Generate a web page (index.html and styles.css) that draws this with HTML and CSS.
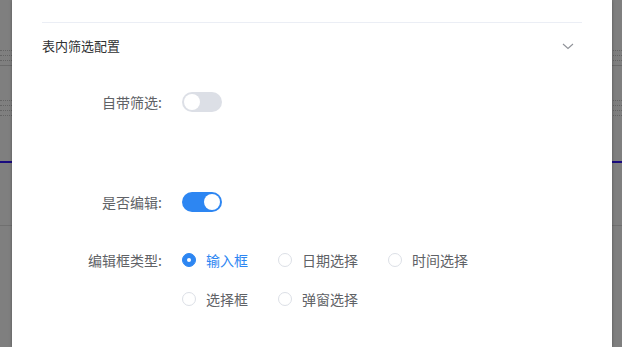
FILE: index.html
```html
<!DOCTYPE html>
<html>
<head>
  <title>表内筛选配置</title>
  <link rel="stylesheet" href="styles.css">
</head>
<body>
  <!-- page behind the drawer -->
  <div class="bg-page">
    <div class="bg-dot"></div>
    <div class="bg-dot"></div>
    <div class="bg-dot"></div>
    <div class="bg-solid"></div>
    <div class="bg-dot gap"></div>
    <div class="bg-dot"></div>
    <div class="bg-dot"></div>
    <div class="bg-dot"></div>
    <div class="bg-accent"></div>
    <div class="bg-solid low"></div>
  </div>
  <div class="mask"></div>

  <div class="drawer">
    <div class="collapse">
      <div class="collapse-head">
        <span>表内筛选配置</span>
        <svg class="chevron" width="12" height="12" viewBox="0 0 12 12"><path d="M1 4 L6 8.5 L11 4" fill="none" stroke="#909399" stroke-width="1.1"/></svg>
      </div>
      <div class="collapse-body">
        <div class="form-item">
          <label class="form-label">自带筛选:</label>
          <span class="switch"><span class="knob"></span></span>
        </div>
        <div class="form-item edit-item">
          <label class="form-label">是否编辑:</label>
          <span class="switch on"><span class="knob"></span></span>
        </div>
        <div class="form-item radio-item">
          <label class="form-label">编辑框类型:</label>
          <div class="radio-group">
            <span class="radio checked"><span class="radio-dot"></span>输入框</span>
            <span class="radio"><span class="radio-dot"></span>日期选择</span>
            <span class="radio"><span class="radio-dot"></span>时间选择</span>
            <span class="radio"><span class="radio-dot"></span>选择框</span>
            <span class="radio"><span class="radio-dot"></span>弹窗选择</span>
          </div>
        </div>
      </div>
    </div>
  </div>
</body>
</html>
```

FILE: styles.css
```css
/* Base */
body {
  margin: 0;
  width: 622px;
  height: 347px;
  overflow: hidden;
  position: relative;
  background: #fff;
  font-family: "Noto Sans CJK SC", "Noto Sans", sans-serif;
  font-size: 14px;
  color: #606266;
}
/* Background page */
.bg-page {
  padding-top: 50px;
}
.bg-dot {
  border-top: 1px dotted #c8c8c8;
  margin-bottom: 4px;
}
.bg-dot.gap {
  margin-top: 34px;
}
.bg-solid {
  border-top: 1px solid #d6d6d6;
}
.bg-accent {
  margin-top: 45px;
  border-top: 2px solid #3418ff;
}
.bg-solid.low {
  margin-top: 62px;
  border-top-color: #e0e0e0;
}
.mask {
  position: absolute;
  top: 0;
  left: 0;
  right: 0;
  bottom: 0;
  background: rgba(0, 0, 0, 0.5);
}
/* Drawer */
.drawer {
  position: absolute;
  top: 0;
  left: 12px;
  width: 600px;
  height: 347px;
  background: #fff;
  box-shadow: 0 0 3px rgba(0, 0, 0, 0.35);
  padding: 22px 30px 0;
  box-sizing: border-box;
}
.collapse-head {
  height: 44px;
  border-top: 1px solid #ebeef5;
  display: flex;
  align-items: center;
  justify-content: space-between;
  font-size: 13px;
  color: #303133;
  padding-right: 8px;
}
.chevron {
  margin-top: 2px;
}
.collapse-body {
  padding-top: 25px;
}
.form-item {
  display: flex;
  align-items: flex-start;
  line-height: 20px;
}
.edit-item {
  margin-top: 80px;
}
.radio-item {
  margin-top: 38px;
}
.form-label {
  width: 140px;
  flex: none;
  padding-right: 20px;
  box-sizing: border-box;
  text-align: right;
}
/* Switch */
.switch {
  width: 40px;
  height: 20px;
  border-radius: 10px;
  background: #dcdfe6;
  position: relative;
  flex: none;
}
.switch .knob {
  position: absolute;
  top: 2px;
  left: 2px;
  width: 16px;
  height: 16px;
  border-radius: 50%;
  background: #fff;
}
.switch.on {
  background: #2d86f2;
}
.switch.on .knob {
  left: 22px;
}
/* Radio */
.radio-group {
  width: 330px;
  display: flex;
  flex-wrap: wrap;
  row-gap: 19px;
}
.radio {
  display: flex;
  align-items: center;
  margin-right: 30px;
}
.radio-dot {
  width: 12px;
  height: 12px;
  border: 1px solid #dcdfe6;
  border-radius: 50%;
  margin-right: 10px;
  box-sizing: content-box;
}
.radio.checked {
  color: #2d86f2;
}
.radio.checked .radio-dot {
  background: #2d86f2;
  border-color: #2d86f2;
  position: relative;
}
.radio.checked .radio-dot::after {
  content: "";
  position: absolute;
  top: 4px;
  left: 4px;
  width: 4px;
  height: 4px;
  border-radius: 50%;
  background: #fff;
}
```
